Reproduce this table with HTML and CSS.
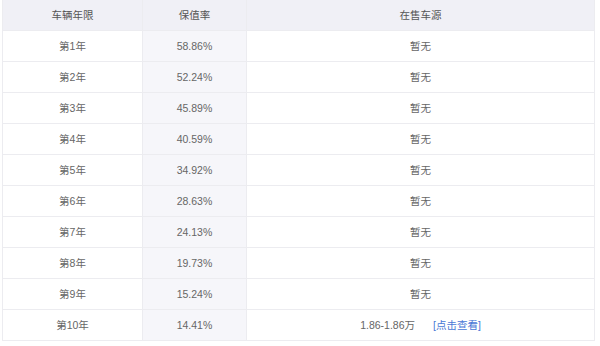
FILE: index.html
```html
<!DOCTYPE html>
<html lang="zh-CN">
<head>
<meta charset="utf-8">
<link rel="stylesheet" href="styles.css">
</head>
<body>
<div class="wrap">
<table class="tbl">
  <colgroup>
    <col class="c1"><col class="c2"><col class="c3">
  </colgroup>
  <thead>
    <tr><th>车辆年限</th><th>保值率</th><th>在售车源</th></tr>
  </thead>
  <tbody>
    <tr><td>第1年</td><td class="rate">58.86%</td><td>暂无</td></tr>
    <tr><td>第2年</td><td class="rate">52.24%</td><td>暂无</td></tr>
    <tr><td>第3年</td><td class="rate">45.89%</td><td>暂无</td></tr>
    <tr><td>第4年</td><td class="rate">40.59%</td><td>暂无</td></tr>
    <tr><td>第5年</td><td class="rate">34.92%</td><td>暂无</td></tr>
    <tr><td>第6年</td><td class="rate">28.63%</td><td>暂无</td></tr>
    <tr><td>第7年</td><td class="rate">24.13%</td><td>暂无</td></tr>
    <tr><td>第8年</td><td class="rate">19.73%</td><td>暂无</td></tr>
    <tr><td>第9年</td><td class="rate">15.24%</td><td>暂无</td></tr>
    <tr><td>第10年</td><td class="rate">14.41%</td><td><span class="price">1.86-1.86万</span><a class="link" href="#">[点击查看]</a></td></tr>
  </tbody>
</table>
</div>
</body>
</html>
```
FILE: styles.css
```css
html, body {
  margin: 0;
  padding: 0;
  background: #fff;
}
body {
  font-family: "Liberation Sans", "Noto Sans CJK SC", sans-serif;
  font-size: 10.5px;
  color: #666;
}
.wrap {
  padding: 0 5px 0 2px;
}
.tbl {
  width: 593px;
  border-collapse: collapse;
  table-layout: fixed;
  border-left: 1px solid #ececf0;
  border-right: 1px solid #ececf0;
}
.c1 { width: 140px; }
.c2 { width: 104px; }
.tbl th, .tbl td {
  height: 30px;
  padding: 0;
  text-align: center;
  vertical-align: middle;
  border: 1px solid #ececf0;
  font-weight: normal;
  line-height: 30px;
}
.tbl th {
  background: #f0f0f6;
  color: #555;
  border-top: none;
}
.tbl td.rate {
  background: #f6f6fa;
}
.price {
  color: #666;
}
.link {
  color: #4a78d6;
  text-decoration: none;
  margin-left: 18px;
}
```
